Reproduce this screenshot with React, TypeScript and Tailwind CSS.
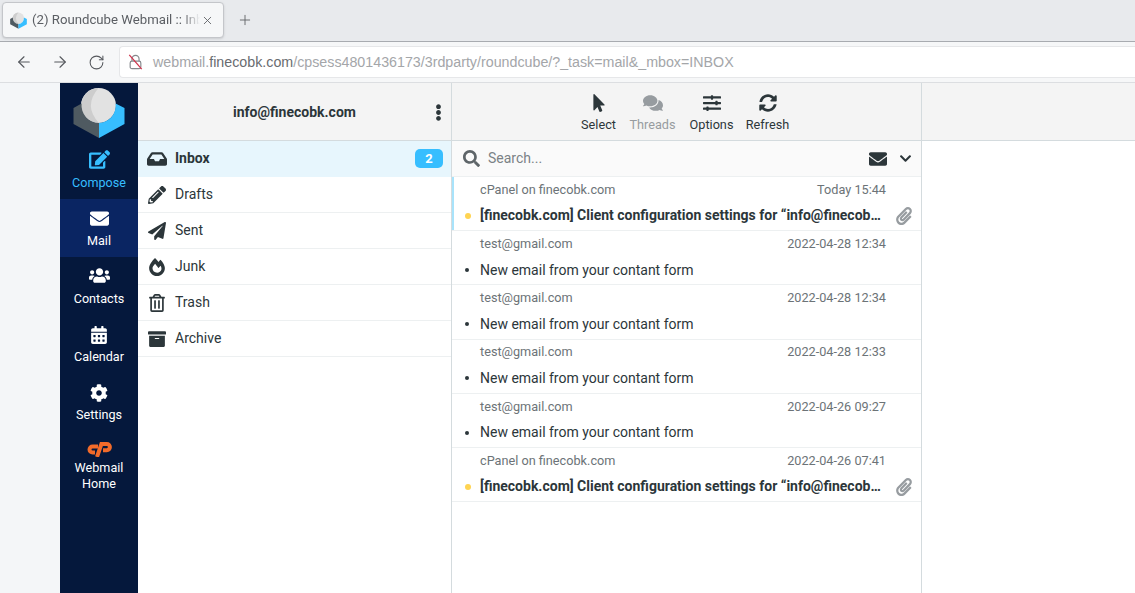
import React from "react";
import {
  FaEdit, FaEnvelope, FaUsers, FaCalendarAlt, FaCog, FaInbox, FaPencilAlt, FaPaperPlane,
  FaFireAlt, FaArchive, FaEllipsisV, FaMousePointer, FaComments, FaSlidersH, FaSyncAlt,
  FaSearch, FaChevronDown, FaPaperclip, FaRegTrashAlt,
} from "react-icons/fa";
import { ArrowLeft, ArrowRight, RotateCw, X, Plus } from "lucide-react";

function Logo({ className }: { className?: string }) {
  return (
    <svg viewBox="0 0 52 51" className={className}>
      <circle cx="25.5" cy="18.5" r="17.5" fill="#e2e2e2" />
      <path d="M25.5 1 A17.5 17.5 0 0 0 26 36 Q 10 19 25.5 1 Z" fill="#cdcdcd" />
      <path d="M0.5 21 L8.6 16.6 A17.5 17.5 0 0 0 26 36 L26 51 L0.5 37 Z" fill="#4f5a61" />
      <path d="M51.5 21 L42.6 16.6 A17.5 17.5 0 0 1 26 36 L26 51 L51.5 37 Z" fill="#37beff" />
    </svg>
  );
}

function CpLogo() {
  return (
    <svg viewBox="0 0 26 16" className="h-[16px] w-[26px]">
      <path d="M12 5.4 H6.6 A3 3 0 0 0 6.6 11.6 H9" fill="none" stroke="#f26b2a" strokeWidth="4" />
      <path d="M11 16 L15.4 3 H20.8 A3 3 0 0 1 20.8 9.2 H17" fill="none" stroke="#f26b2a" strokeWidth="4" />
    </svg>
  );
}

const navItems = [
  { label: "Compose", Icon: FaEdit, cls: "text-[#37beff]", size: 21 },
  { label: "Mail", Icon: FaEnvelope, cls: "text-white bg-[#0a2562]", size: 19 },
  { label: "Contacts", Icon: FaUsers, cls: "text-white", size: 21 },
  { label: "Calendar", Icon: FaCalendarAlt, cls: "text-white", size: 18 },
  { label: "Settings", Icon: FaCog, cls: "text-white", size: 18 },
];

const folders = [
  { label: "Inbox", Icon: FaInbox, active: true },
  { label: "Drafts", Icon: FaPencilAlt },
  { label: "Sent", Icon: FaPaperPlane },
  { label: "Junk", Icon: FaFireAlt },
  { label: "Trash", Icon: FaRegTrashAlt },
  { label: "Archive", Icon: FaArchive },
];

const tools = [
  { label: "Select", Icon: FaMousePointer, w: "w-[52px]", muted: false, size: 18 },
  { label: "Threads", Icon: FaComments, w: "w-[56px]", muted: true, size: 20 },
  { label: "Options", Icon: FaSlidersH, w: "w-[62px]", muted: false, size: 18 },
  { label: "Refresh", Icon: FaSyncAlt, w: "w-[50px]", muted: false, size: 18 },
];

const subject = "[finecobk.com] Client configuration settings for “info@finecobk.com”";
const plain = "New email from your contant form";
const mails = [
  { from: "cPanel on finecobk.com", date: "Today 15:44", subject, unread: true, selected: true },
  { from: "test@gmail.com", date: "2022-04-28 12:34", subject: plain },
  { from: "test@gmail.com", date: "2022-04-28 12:34", subject: plain },
  { from: "test@gmail.com", date: "2022-04-28 12:33", subject: plain },
  { from: "test@gmail.com", date: "2022-04-26 09:27", subject: plain },
  { from: "cPanel on finecobk.com", date: "2022-04-26 07:41", subject, unread: true },
];

export default function App() {
  return (
    <div className="flex h-[593px] w-[1135px] flex-col overflow-hidden bg-white font-['Roboto',sans-serif] text-[14px] text-[#2c363a]">
      <div className="flex h-[42px] shrink-0 items-start border-b border-[#a8abb0] bg-[#e8eaed] pl-[2px] pt-[2px]">
        <div className="flex h-[36px] w-[222px] items-center rounded-[4px] border border-[#c4c6ca] bg-[#f6f7f8] pl-[7px] shadow-sm">
          <Logo className="h-[17px] w-[17px] shrink-0" />
          <span className="ml-[5px] w-[169px] overflow-hidden whitespace-nowrap text-[13.2px] text-[#5b5e63] [mask-image:linear-gradient(to_right,black_150px,transparent_168px)]">
            (2) Roundcube Webmail :: Inbox
          </span>
          <X size={13} strokeWidth={1.6} className="shrink-0 text-[#5b5e63]" />
        </div>
        <Plus size={16} strokeWidth={1.4} className="ml-[13px] mt-[10px] text-[#63666b]" />
      </div>

      <div className="flex h-[41px] shrink-0 items-center border-b border-[#dcdee1] bg-[#f6f7f8] pl-[15px]">
        <ArrowLeft size={18} strokeWidth={1.5} className="text-[#55585d]" />
        <ArrowRight size={18} strokeWidth={1.5} className="ml-[18px] text-[#55585d]" />
        <RotateCw size={17} strokeWidth={1.5} className="ml-[19px] text-[#55585d]" />
        <div className="ml-[14px] flex h-[32px] flex-1 items-center rounded-l-[4px] border border-r-0 border-[#e6e7e9] bg-white pl-[8px]">
          <svg viewBox="0 0 16 18" className="h-[16px] w-[15px]">
            <path d="M4 8 V5.5 A4 4 0 0 1 12 5.5 V8" fill="none" stroke="#85888c" strokeWidth="1.3" />
            <rect x="2" y="8" width="12" height="8.5" rx="2" fill="none" stroke="#85888c" strokeWidth="1.3" />
            <path d="M1 1 L15 17" stroke="#d0334c" strokeWidth="1.4" />
          </svg>
          <span className="ml-[10px] whitespace-nowrap pt-[1px] font-['Liberation_Sans',sans-serif] text-[14.25px] text-[#a4a6a9]">
            webmail.<span className="text-[#696c70]">finecobk.com</span>/cpsess4801436173/3rdparty/roundcube/?_task=mail&amp;_mbox=INBOX
          </span>
        </div>
      </div>

      <div className="flex min-h-0 flex-1 bg-white">
        <div className="w-[60px] shrink-0 bg-[#f4f6f8]" />

        <nav className="flex w-[78px] shrink-0 flex-col items-stretch bg-[#05183c] text-[12.6px]">
          <div className="flex h-[58px] items-start justify-center pt-[4px]">
            <Logo className="h-[51px] w-[52px]" />
          </div>
          {navItems.map(({ label, Icon, cls, size }) => (
            <div key={label} className={`flex h-[58px] flex-col items-center ${cls}`}>
              <div className="flex h-[34px] items-end pb-[5px]">
                <Icon size={size} />
              </div>
              <span className="leading-[16px]">{label}</span>
            </div>
          ))}
          <div className="flex flex-col items-center pt-[10px] text-white">
            <CpLogo />
            <span className="mt-[3px] text-center leading-[15.5px]">Webmail<br />Home</span>
          </div>
        </nav>

        <section className="flex w-[314px] shrink-0 flex-col border-r border-[#d4dbde]">
          <header className="relative flex h-[58px] shrink-0 items-center justify-center border-b border-[#d4dbde] bg-[#f4f4f4] pt-[2px] text-[14px] font-bold">
            info@finecobk.com
            <FaEllipsisV size={17} className="absolute right-[4px] top-[21px]" />
          </header>
          {folders.map(({ label, Icon, active }) => (
            <div
              key={label}
              className={`flex h-[36px] shrink-0 items-center border-b ${active ? "border-transparent bg-[#e7f6fd] font-bold" : "border-[#edf0f1]"} pl-[8px] pr-[8px]`}
            >
              <span className="flex w-[29px] justify-center pr-[8px]"><Icon size={label === "Inbox" ? 20 : 18} /></span>
              <span>{label}</span>
              {active && (
                <span className="ml-auto flex h-[19px] w-[28px] items-center justify-center rounded-[5px] bg-[#37beff] text-[13px] font-bold text-white">2</span>
              )}
            </div>
          ))}
        </section>

        <section className="flex w-[470px] shrink-0 flex-col border-r border-[#d4dbde]">
          <header className="flex h-[58px] shrink-0 items-center justify-center border-b border-[#d4dbde] bg-[#f4f4f4] pr-[8px] text-[12.7px]">
            {tools.map(({ label, Icon, w, muted, size }) => (
              <div key={label} className={`flex ${w} flex-col items-center ${muted ? "text-[#979ca0]" : "text-[#2c363a]"}`}>
                <div className="flex h-[24px] items-center"><Icon size={size} /></div>
                <span className="mt-[2px] leading-[16px]">{label}</span>
              </div>
            ))}
          </header>
          <div className="flex h-[36px] shrink-0 items-center border-b border-[#edf0f1] bg-[#fafafa] pl-[11px] pr-[8px]">
            <FaSearch size={17} className="text-[#5e6569]" />
            <span className="ml-[8px] text-[#7b8286]">Search...</span>
            <FaEnvelope size={18} className="ml-auto" />
            <FaChevronDown size={13} className="ml-[12px] mr-[1px]" />
          </div>
          {mails.map((m, i) => (
            <div key={i} className="relative flex h-[54.2px] shrink-0 flex-col border-b border-[#edf0f1] pl-[28px] pr-[8px]">
              {m.selected && <div className="absolute bottom-0 left-0 top-0 w-[2px] bg-[#a8e3fb]" />}
              <div className="flex h-[24px] items-center justify-between pr-[27px] pt-[1px] text-[12.7px] text-[#6c7377]">
                <span>{m.from}</span>
                <span>{m.date}</span>
              </div>
              <div className="flex h-[30px] items-center pt-[1px]">
                <span className={`absolute left-[13px] rounded-full ${m.unread ? "h-[6px] w-[6px] bg-[#ffd452]" : "h-[4px] w-[4px] bg-[#2c363a]"}`} />
                <span className={`min-w-0 flex-1 truncate ${m.unread ? "font-bold" : ""}`}>{m.subject}</span>
                {m.unread && (
                  <span className="flex w-[26px] shrink-0 justify-end"><FaPaperclip size={18} className="text-[#979ca0]" /></span>
                )}
                {!m.unread && <span className="w-[26px] shrink-0" />}
              </div>
            </div>
          ))}
        </section>

        <section className="flex min-w-0 flex-1 flex-col">
          <div className="h-[58px] border-b border-[#d4dbde] bg-[#f4f4f4]" />
        </section>
      </div>
    </div>
  );
}
